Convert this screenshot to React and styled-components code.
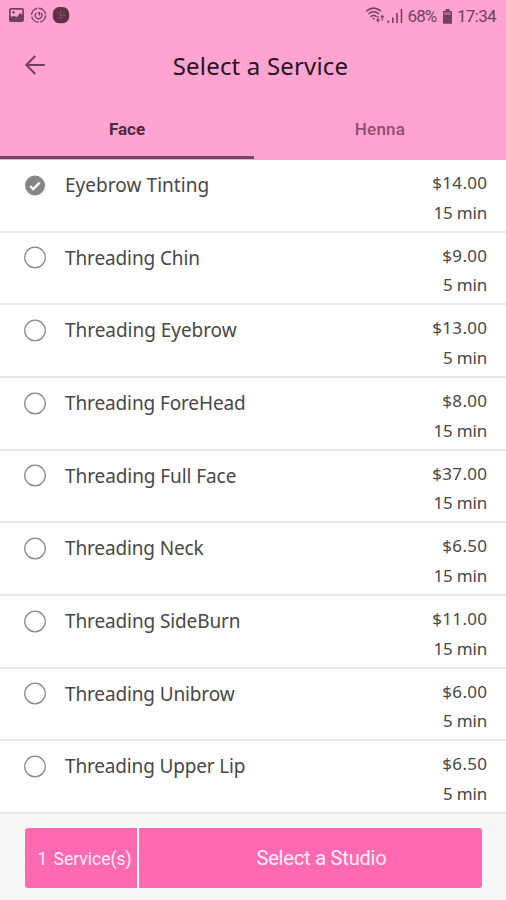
import React from "react";
import styled, { createGlobalStyle } from "styled-components";

const Global = createGlobalStyle`
  * { box-sizing: border-box; }
  body { margin: 0; background: #fff; }
  button { font: inherit; border: 0; padding: 0; background: none; color: inherit; }
`;

const Screen = styled.main`
  width: 506px;
  height: 900px;
  display: flex;
  flex-direction: column;
  overflow: hidden;
  background: #fefefe;
  font-family: "Noto Sans", sans-serif;
`;
const Header = styled.header`
  height: 160px;
  flex: none;
  background: #ffa3d0;
`;
const StatusBar = styled.div`
  height: 32px;
  display: flex;
  justify-content: space-between;
  padding: 0 9px 0 8px;
  color: #72405d;
`;
const StatusGroup = styled.div`
  display: flex;
  align-items: center;
  svg { display: block; }
`;
const StatusText = styled.span`
  font: 400 17px/32px Roboto, sans-serif;
  width: ${(p) => p.$width}px;
  margin-left: ${(p) => p.$gap}px;
  letter-spacing: ${(p) => p.$track}px;
  white-space: nowrap;
`;
const TitleBar = styled.div`
  height: 66px;
  display: grid;
  grid-template-columns: 70px 1fr 55px;
  align-items: center;
`;
const BackButton = styled.button`
  display: flex;
  width: 22px;
  margin-left: 24px;
`;
const Title = styled.h1`
  margin: 0;
  padding-top: 2px;
  text-align: center;
  font-size: 24px;
  font-weight: 400;
  line-height: 32px;
  letter-spacing: 0.18px;
  white-space: nowrap;
  color: #241522;
`;
const Tabs = styled.nav`
  height: 62px;
  display: grid;
  grid-template-columns: 254px 252px;
`;
const Tab = styled.button`
  height: 60.5px;
  padding-top: 4px;
  border-bottom: 3px solid ${(p) => (p.$active ? "#6f4861" : "transparent")};
  font: 500 17px/54px Roboto, sans-serif;
  font-weight: ${(p) => (p.$active ? 700 : 500)};
  letter-spacing: ${(p) => (p.$active ? 0 : 0.2)}px;
  color: ${(p) => (p.$active ? "#4a2a3f" : "#8b4f72")};
`;
const List = styled.ul`
  list-style: none;
  margin: 0;
  padding: 0;
  height: 654px;
  flex: none;
`;
const Row = styled.li`
  height: 72.68px;
  display: grid;
  grid-template-columns: 65px 1fr auto;
  padding-right: 19px;
  border-bottom: 2px solid #e8e8e8;
`;
const Mark = styled.div`
  padding: 13.5px 0 0 23px;
  svg { display: block; }
`;
const Name = styled.div`
  padding-top: 11px;
  font-size: 19px;
  line-height: 28px;
  letter-spacing: ${(p) => p.$track}px;
  white-space: nowrap;
  color: #484848;
`;
const Details = styled.div`
  padding-top: 8px;
  text-align: right;
  font-size: 17px;
  line-height: 29.5px;
  color: #484848;
`;
const Price = styled.div`
  margin-right: -0.3px;
  letter-spacing: 0.3px;
`;
const Duration = styled.div`
  letter-spacing: -0.2px;
`;
const Footer = styled.footer`
  flex: 1;
  padding: 14px 24px 12px 25px;
  background: #f7f7f7;
`;
const Action = styled.button`
  width: 457px;
  height: 60px;
  display: grid;
  grid-template-columns: 112px 1fr;
  gap: 2px;
  overflow: hidden;
  border-radius: 3px;
  background: #fff;
  color: #fff0f8;
  font-family: Roboto, sans-serif;
`;
const ActionPart = styled.span`
  display: flex;
  align-items: center;
  justify-content: center;
  background: #ff69b2;
  padding: ${(p) => p.$pad};
  font-size: ${(p) => p.$size}px;
  letter-spacing: ${(p) => p.$track}px;
  word-spacing: ${(p) => p.$word || 0}px;
  white-space: nowrap;
`;

const services = [
  ["Eyebrow Tinting", "$14.00", "15 min", true, 0.05],
  ["Threading Chin", "$9.00", "5 min", false, -0.12],
  ["Threading Eyebrow", "$13.00", "5 min", false, -0.04],
  ["Threading ForeHead", "$8.00", "15 min", false, -0.12],
  ["Threading Full Face", "$37.00", "15 min", false, -0.08],
  ["Threading Neck", "$6.50", "15 min", false, -0.14],
  ["Threading SideBurn", "$11.00", "15 min", false, -0.12],
  ["Threading Unibrow", "$6.00", "5 min", false, -0.14],
  ["Threading Upper Lip", "$6.50", "5 min", false, -0.16],
];

const Notifications = () => (
  <svg width="64" height="20" viewBox="0 0 64 20" fill="none">
    <rect x="1.9" y="2.9" width="13.2" height="12.2" rx="1" stroke="currentColor" strokeWidth="1.7" />
    <circle cx="5.5" cy="6.3" r="1.2" fill="currentColor" />
    <path d="M2 14v-3l4-1 3 1 3-4 3 2v6H2z" fill="currentColor" />
    <circle cx="30.6" cy="9.2" r="7" stroke="currentColor" strokeWidth="1.4" strokeDasharray="9.5 1.5" />
    <path d="M28.3 6.8a3.4 3.4 0 1 0 4.8.2M30 6.8h1.4v2.7" stroke="currentColor" strokeWidth="1.4" />
    <rect x="44.8" y="1" width="16.4" height="16.2" rx="6.5" fill="#603047" />
    <path d="m49 6 7 7m-3.5-8v9m4.8-4.5H51m5-3-6 6" stroke="#985777" strokeWidth=".9" strokeDasharray="2 1.2" />
  </svg>
);
const Signal = () => (
  <svg width="39" height="20" viewBox="0 0 39 20" fill="none" stroke="currentColor">
    <path d="M1.2 5.2Q8.5-1 16 5.2M3.4 8Q8.7 3.5 14 8M5.5 10.8q3.2-2.8 6.2 0" strokeWidth="1.5" />
    <path d="m7.2 12 1.5 1.8 1.5-1.8z" fill="currentColor" stroke="none" />
    <path d="M13 10v5m-1.5-1.5L13 15.5l1.5-2M17.3 14.5V10m-1.5 1.5 1.5-2 1.5 2" strokeWidth="1.1" />
    <path d="M23.3 14.5V17M27.8 11.5V17M32 7v10M36.5 3v14" strokeWidth="1.6" />
  </svg>
);
const Battery = () => (
  <svg width="11" height="17" viewBox="0 0 11 17">
    <path d="M3.5 1h4v2H10v12.8H1V3h2.5z" fill="currentColor" />
    <path d="M2.2 4.2h6.5V7H2.2z" fill="#b0698f" />
  </svg>
);
const BackArrow = () => (
  <svg width="22" height="22" viewBox="0 0 22 22" fill="none" stroke="#763f60" strokeWidth="2">
    <path d="M20.8 11H3M11.3 2 2.3 11l9 9" />
  </svg>
);
const RadioMark = ({ checked }) => (
  <svg width="24" height="24" viewBox="0 0 24 24" fill="none">
    {checked ? (
      <>
        <circle cx="12" cy="11.5" r="10" fill="#868686" />
        <path d="m7.1 12 3.1 3.1 6.5-6.5" stroke="#fff" strokeWidth="2.2" />
      </>
    ) : (
      <circle cx="12" cy="11.5" r="10.3" stroke="#888" strokeWidth="1.2" />
    )}
  </svg>
);

export default function App() {
  return (
    <Screen>
      <Global />
      <Header>
        <StatusBar>
          <StatusGroup><Notifications /></StatusGroup>
          <StatusGroup>
            <Signal />
            <StatusText $width={34} $gap={3.5} $track={-0.9}>68%</StatusText>
            <Battery />
            <StatusText $width={40} $gap={4.5} $track={-0.7}>17:34</StatusText>
          </StatusGroup>
        </StatusBar>
        <TitleBar>
          <BackButton aria-label="Back"><BackArrow /></BackButton>
          <Title>Select a Service</Title>
        </TitleBar>
        <Tabs>
          <Tab $active>Face</Tab>
          <Tab>Henna</Tab>
        </Tabs>
      </Header>
      <List>
        {services.map(([name, price, time, checked, track]) => (
          <Row key={name}>
            <Mark><RadioMark checked={checked} /></Mark>
            <Name $track={track}>{name}</Name>
            <Details>
              <Price>{price}</Price>
              <Duration>{time}</Duration>
            </Details>
          </Row>
        ))}
      </List>
      <Footer>
        <Action>
          <ActionPart $size={17.5} $track={0} $word={2} $pad="2px 0 0 7px">1 Service(s)</ActionPart>
          <ActionPart $size={20} $track={-0.18} $pad="0 0 0 22px">Select a Studio</ActionPart>
        </Action>
      </Footer>
    </Screen>
  );
}
